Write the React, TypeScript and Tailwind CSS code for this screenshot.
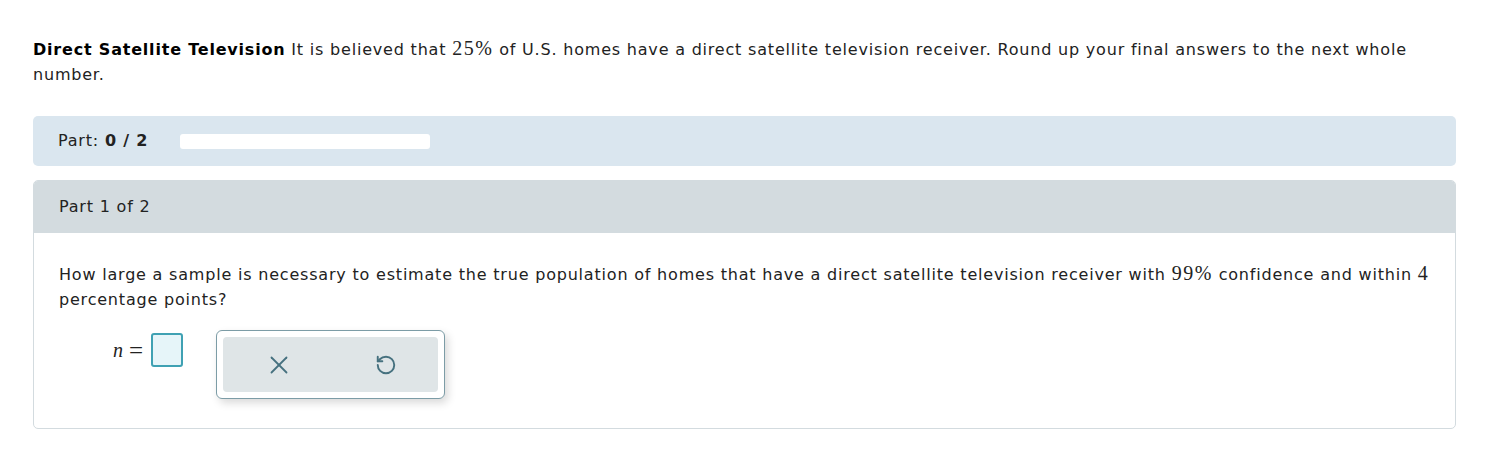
import { X, RotateCcw } from "lucide-react";

const sans = { fontFamily: '"DejaVu Sans", Verdana, sans-serif' };
const serif = { fontFamily: '"Liberation Serif", "Times New Roman", serif' };

function Num({ children }: { children: React.ReactNode }) {
  return (
    <span className="text-[20px] tracking-[1.5px]" style={serif}>
      {children}
    </span>
  );
}

export default function App() {
  return (
    <div
      className="bg-white pl-[33px] pr-[31px] pt-[36px] pb-[38px] text-[16px] tracking-[0.8px] text-[#222]"
      style={sans}
    >
      {/* Problem statement */}
      <p className="leading-[25px]">
        <b className="text-black">Direct Satellite Television</b> It is believed that <Num>25%</Num> of U.S. homes have a
        direct satellite television receiver. Round up your final answers to the next whole number.
      </p>

      {/* Progress */}
      <div className="mt-[29px] flex h-[50px] items-center rounded-[5px] bg-[#dae6ef] pl-[25px]">
        <span>
          Part: <b>0 / 2</b>
        </span>
        <div className="ml-[32px] h-[15px] w-[250px] rounded-[3px] bg-white" />
      </div>

      {/* Part card */}
      <div className="mt-[14px] overflow-hidden rounded-[5px] border border-[#d3dbdf]">
        <div className="flex h-[52px] items-center bg-[#d3dbdf] pl-[25px]">Part 1 of 2</div>
        <div className="px-[25px] pt-[28px] pb-[29px]">
          <p className="leading-[25px]">
            How large a sample is necessary to estimate the true population of homes that have a direct satellite
            television receiver with <Num>99%</Num> confidence and within <Num>4</Num> percentage points?
          </p>
          <div className="mt-[18px] flex items-start">
            <div className="mt-[3px] flex items-center pl-[54px]">
              <span className="text-[20px] italic tracking-normal" style={serif}>
                n
              </span>
              <span className="ml-[6px] text-[25px] leading-none tracking-normal" style={serif}>
                =
              </span>
              <div className="ml-[8px] h-[34px] w-[32px] rounded-[3px] border-2 border-[#3fa1b3] bg-[#e6f5f9]" />
            </div>
            <div className="ml-[33px] rounded-[6px] border border-[#7c9ca6] bg-white p-[6px] shadow-[3px_4px_8px_rgba(0,0,0,0.15)]">
              <div className="flex h-[55px] w-[215px] items-center justify-around rounded-[4px] bg-[#dfe5e7] text-[#46717f]">
                <X size={30} strokeWidth={1.45} />
                <RotateCcw size={22} strokeWidth={2.1} />
              </div>
            </div>
          </div>
        </div>
      </div>
    </div>
  );
}
